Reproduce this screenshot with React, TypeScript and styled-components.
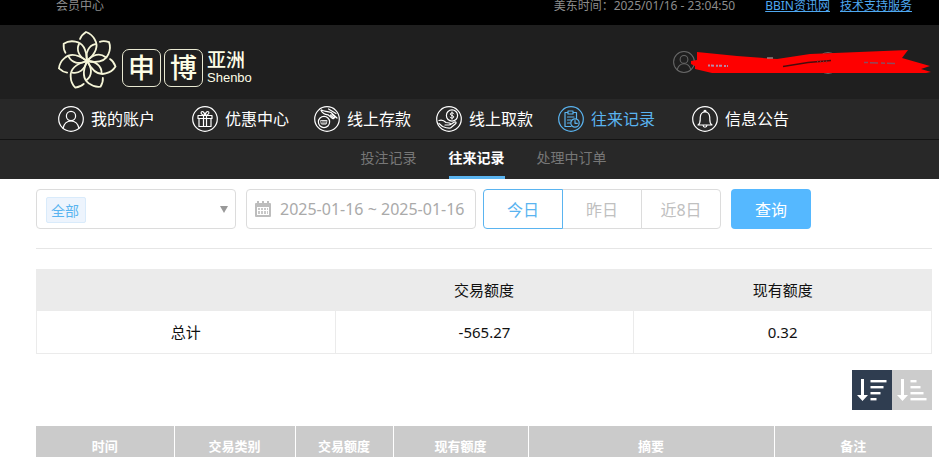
import React from "react";
import styled, { createGlobalStyle, css } from "styled-components";

const GlobalStyle = createGlobalStyle`
  *, *::before, *::after { box-sizing: border-box; }
  html { scrollbar-width: none; }
  body {
    margin: 0;
    background: #fff;
    color: #222;
    font-family: "Noto Sans", "Noto Sans CJK SC", sans-serif;
    font-size: 14px;
  }
  button, input, select { font-family: inherit; }
`;

const blue = "#5ab4f0";

const TopBar = styled.div`
  display: flex;
  align-items: flex-start;
  height: 25px;
  padding: 0 27px 0 56px;
  background: #000;
  color: #8c8c8c;
  font-size: 12px;
  line-height: 12px;
`;

const Clock = styled.span`
  margin-left: auto;
  margin-right: 30px;
`;

const TopLinks = styled.nav`
  display: flex;
  gap: 10px;
`;

const TopLink = styled.a`
  color: #4fa8f0;
  text-decoration: underline;
`;

const Header = styled.header`
  display: flex;
  align-items: center;
  height: 74px;
  padding: 0 7px 0 56px;
  background: #1f1f1f;
`;

const Logo = styled.a`
  display: flex;
  align-items: center;
  color: #fdfde6;
  text-decoration: none;
`;

const LogoSeals = styled.span`
  display: flex;
  gap: 3px;
  margin: 11px 4px 0 4px;
`;

const Seal = styled.span`
  display: flex;
  align-items: center;
  justify-content: center;
  width: 39px;
  height: 38px;
  border: 1px solid #e9e9d2;
  border-radius: 7px;
  font-size: 27px;
  font-weight: 500;
  line-height: 32px;
`;

const LogoWords = styled.span`
  display: flex;
  flex-direction: column;
  margin-top: 12px;
`;

const LogoRegion = styled.span`
  font-size: 19px;
  font-weight: 500;
  line-height: 20px;
`;

const LogoLatin = styled.span`
  font-family: "Liberation Sans", sans-serif;
  font-size: 13px;
  line-height: 16px;
`;

const Account = styled.div`
  display: flex;
  align-items: center;
  margin-left: auto;
`;

const Scribble = styled.svg`
  display: block;
  margin-left: -5px;
`;

const MainNav = styled.nav`
  height: 41px;
  padding: 0 56px 0 58px;
  background: #282828;
  border-bottom: 1px solid #131313;
`;

const MainList = styled.ul`
  display: flex;
  align-items: center;
  gap: 25px;
  height: 40px;
  margin: 0;
  padding: 0;
  list-style: none;
`;

const MainItem = styled.li<{ $spaced?: boolean }>`
  margin-right: ${(p) => (p.$spaced ? "12px" : "0")};
`;

const MainLink = styled.a<{ $active?: boolean }>`
  display: flex;
  align-items: center;
  gap: 7px;
  color: ${(p) => (p.$active ? blue : "#fff")};
  font-size: 16px;
  line-height: 26px;
  white-space: nowrap;
  text-decoration: none;
`;

const SubNav = styled.nav`
  display: flex;
  justify-content: center;
  gap: 32px;
  height: 39px;
  padding: 0 8px 0 36px;
  background: #282828;
`;

const SubLink = styled.a<{ $active?: boolean }>`
  border-bottom: 3px solid ${(p) => (p.$active ? blue : "transparent")};
  color: ${(p) => (p.$active ? "#fff" : "#777")};
  font-weight: ${(p) => (p.$active ? 700 : 400)};
  line-height: 36px;
  text-decoration: none;
`;

const Content = styled.main`
  padding: 10px 7px 0 36px;
`;

const Filters = styled.form`
  display: flex;
  gap: 10px;
  padding-bottom: 19px;
  border-bottom: 1px solid #e6e6e6;
`;

const field = css`
  height: 40px;
  border: 1px solid #dcdcdc;
  border-radius: 4px;
  background: #fff;
`;

const SelectBox = styled.div`
  ${field}
  position: relative;
  width: 200px;
`;

const TagPlate = styled.span`
  position: absolute;
  top: 7px;
  left: 9px;
  width: 40px;
  height: 26px;
  border: 1px solid #d9ebfb;
  border-radius: 2px;
  background: #edf4fd;
`;

const SelectArrow = styled.svg`
  position: absolute;
  top: 16px;
  right: 7px;
  pointer-events: none;
`;

const Select = styled.select`
  position: relative;
  width: 100%;
  height: 38px;
  padding: 3px 24px 0 14px;
  border: 0;
  background: transparent;
  color: ${blue};
  font-size: 14px;
  appearance: none;
`;

const DateBox = styled.label`
  ${field}
  display: flex;
  align-items: center;
  gap: 8px;
  width: 230px;
  padding: 0 7px;
`;

const DateInput = styled.input`
  flex: 1;
  min-width: 0;
  padding: 0;
  border: 0;
  background: transparent;
  color: #aaa;
  font-size: 16px;
`;

const Ranges = styled.div`
  display: flex;
  margin-left: -3px;
`;

const RangeButton = styled.button<{ $active?: boolean }>`
  width: 80px;
  height: 40px;
  padding: 0;
  border: 1px solid ${(p) => (p.$active ? blue : "#dcdcdc")};
  background: #fff;
  color: ${(p) => (p.$active ? blue : "#c0c0c0")};
  font-size: 16px;
  position: relative;
  z-index: ${(p) => (p.$active ? 1 : 0)};
  &:first-child { border-radius: 4px 0 0 4px; }
  &:last-child { border-radius: 0 4px 4px 0; }
  & + & { margin-left: -1px; }
`;

const QueryButton = styled.button`
  width: 80px;
  height: 40px;
  padding: 0;
  border: 0;
  border-radius: 4px;
  background: #55b8ff;
  color: #fff;
  font-size: 16px;
`;

const Summary = styled.table`
  width: 100%;
  margin-top: 20px;
  border-spacing: 0;
  table-layout: fixed;
  color: #111;
  font-size: 15px;
  line-height: 22px;
  text-align: center;
  th, td {
    padding: 0;
    font-weight: 400;
  }
  th {
    height: 42px;
    background: #ebebeb;
  }
  td {
    height: 43px;
    border: solid #ebebeb;
    border-width: 0 0 1px 1px;
  }
  td:last-child { border-right-width: 1px; }
`;

const SortBar = styled.div`
  display: flex;
  justify-content: flex-end;
  margin: 16px 0;
`;

const SortButton = styled.button<{ $active?: boolean }>`
  display: flex;
  width: 40px;
  height: 40px;
  padding: 0;
  border: 0;
  background: ${(p) => (p.$active ? "#2f3d50" : "#ccc")};
`;

const Records = styled.table`
  width: 100%;
  border-collapse: collapse;
  table-layout: fixed;
  th {
    height: 40px;
    padding: 0;
    background: #cbcbcb;
    color: #fff;
    font-size: 13px;
    font-weight: 700;
    line-height: 20px;
  }
  th + th { border-left: 1px solid #fff; }
`;

const petals = [0, 1, 2, 3, 4, 5, 6];

const Flower = () => (
  <svg width="62" height="62" viewBox="-31 -30 62 62" fill="none" stroke="#f6f6d8" strokeWidth="1.800" strokeLinecap="round" aria-hidden="true">
    {petals.map((i) => (
      <g key={i} transform={`rotate(${(i * 360) / 7})`}>
        <path d="M0 0C-8 -4 -11 -11 -8 -17" />
        <path d="M0 0C7 -6 12 -14 8 -21C6 -25 2 -28 -1 -29C-4 -27 -6 -25 -7 -22" />
      </g>
    ))}
  </svg>
);

const iconShapes: Record<string, React.ReactNode> = {
  user: (
    <>
      <circle cx="13" cy="10" r="4.600" />
      <path d="M5 22.400C6 17.500 9 15 13 15S20 17.500 21 22.400" />
    </>
  ),
  gift: (
    <>
      <path d="M6 9.500h14v3H6zM7 12.500h12v8H7zM11.500 9.500v11M14.500 9.500v11M13 9.200C10 9 8.500 7.500 9.300 6C10.500 4.500 12.500 6.500 13 9.200C13.500 6.500 15.500 4.500 16.700 6C17.500 7.500 16 9 13 9.200" />
    </>
  ),
  deposit: (
    <>
      <circle cx="10" cy="16" r="5.600" />
      <path d="M7 14.500h6l-.7 3.500h-4.600zM9 14.500v3.500M11 14.500v3.500" strokeWidth="0.800" />
      <path d="M7.500 4C10 5.500 13 5 17 6.500L23 12M7 4.500C8.500 7.500 10.500 8.500 14 8.800L18.500 12.500C19.500 13 20 12.300 19.500 11.600L16.500 9M19.500 11.600C20.800 12.200 21.300 11.200 20.500 10.500L18 8.300M14.500 3L22 7.500" />
    </>
  ),
  withdraw: (
    <>
      <circle cx="16" cy="9.500" r="5.600" />
      <path d="M18 7.700C17.200 6.400 14.200 6.600 14.300 8.200C14.400 9.800 17.800 9.100 17.800 10.900C17.800 12.500 14.800 12.600 14 11.200M16 5.900v7.300" strokeWidth="1" />
      <path d="M3 14.500C6 13.500 8 14.500 10 16.500L13.500 17C15 17.500 14.500 19 13 19H9M14.500 18.500L18.500 16C20 15.500 20.700 16.800 19.500 17.800L14.500 22C11.500 22.500 9 21.500 6.500 20.500L3 17.500" />
    </>
  ),
  records: (
    <>
      <path d="M13 20.500H7V6.500h3M15 6.500h3.500v6M10 5h5v3h-5zM9.500 11h6.500M9.500 14h3.500M9.500 17h2.500" />
      <circle cx="17" cy="17" r="4.200" />
      <path d="M17 14.500v2.800h2.300" />
    </>
  ),
  bell: (
    <>
      <path d="M6 19C9 17 8 14 8.300 11C8.600 7.700 10.500 6 13 6S17.400 7.700 17.700 11C18 14 17 17 20 19ZM12 5.800C12 4 14 4 14 5.800M11 19.300C11.300 21.900 14.700 21.900 15 19.300" />
    </>
  ),
};

const CircleIcon = ({ name, size = 26 }: { name: string; size?: number }) => (
  <svg width={size} height={size} viewBox="0 0 26 26" fill="none" stroke="currentColor" strokeWidth="1.200" strokeLinecap="round" strokeLinejoin="round" aria-hidden="true">
    <circle cx="13" cy="13" r="12.300" />
    {iconShapes[name]}
  </svg>
);

const AccountMark = styled.span`
  display: flex;
  color: #686868;
`;

const CalendarIcon = () => (
  <svg width="18" height="18" viewBox="0 0 18 18" aria-hidden="true">
    <path fill="#bdbdbd" fillRule="evenodd" d="M1 4Q1 3 2 3h1V1h2v2h3V1h2v2h3V1h2v2h1Q17 3 17 4v12Q17 17 16 17H2Q1 17 1 16zM3 7v8h12V7z" />
    <path fill="#c8c8c8" d="M4 8h2v2H4zM7 8h2v2H7zM10 8h2v2h-2zM13 8h1v2h-1zM4 11h2v3H4zM7 11h2v3H7zM10 11h2v3h-2zM13 11h1v3h-1z" />
  </svg>
);

const SortIcon = ({ widths }: { widths: number[] }) => (
  <svg width="40" height="40" viewBox="0 0 40 40" fill="#fff" aria-hidden="true">
    <path d="M9 9h3v16h4l-5.500 6L5 25h4z" />
    {widths.map((w, i) => (
      <rect key={i} x="18.500" y={10 + i * 6} width={w} height="2.400" />
    ))}
  </svg>
);

const mainItems = [
  { label: "我的账户", icon: "user", spaced: true },
  { label: "优惠中心", icon: "gift" },
  { label: "线上存款", icon: "deposit" },
  { label: "线上取款", icon: "withdraw" },
  { label: "往来记录", icon: "records", active: true, spaced: true },
  { label: "信息公告", icon: "bell" },
];

const columns = [
  { label: "时间", share: 138 },
  { label: "交易类别", share: 121 },
  { label: "交易额度", share: 98 },
  { label: "现有额度", share: 135 },
  { label: "摘要", share: 246 },
  { label: "备注", share: 158 },
];
const totalShare = columns.reduce((sum, c) => sum + c.share, 0);

export default function App() {
  return (
    <>
      <GlobalStyle />
      <TopBar>
        <span>会员中心</span>
        <Clock>美东时间：2025/01/16 - 23:04:50</Clock>
        <TopLinks>
          <TopLink href="#news">BBIN资讯网</TopLink>
          <TopLink href="#support">技术支持服务</TopLink>
        </TopLinks>
      </TopBar>
      <Header>
        <Logo href="#home">
          <Flower />
          <LogoSeals>
            <Seal>申</Seal>
            <Seal>博</Seal>
          </LogoSeals>
          <LogoWords>
            <LogoRegion>亚洲</LogoRegion>
            <LogoLatin>Shenbo</LogoLatin>
          </LogoWords>
        </Logo>
        <Account>
          <AccountMark>
            <CircleIcon name="user" size={22} />
          </AccountMark>
          <Scribble width="242" height="26" viewBox="0 0 242 26" aria-hidden="true">
            <circle cx="138" cy="14" r="10.500" fill="none" stroke="#686868" />
            <path fill="#fe0000" d="M7 3L47 7L87 10L120 5L218 1L212 9L240 17L231 20L241 23L236 24H22L5 20V17L1 15V12L7 11Z" />
            <path d="M93 17.500L118 13.500L141 11.500" stroke="#4a0c0c" strokeWidth="1.500" fill="none" />
            <path d="M18 16.500L38 17" stroke="#b58aa6" strokeWidth="2" strokeDasharray="2 1 3 2" />
            <path d="M127 12.500h12" stroke="#7d3030" strokeWidth="2" strokeDasharray="1 2" />
            <path d="M174 13.500L207 14.500" stroke="#8f4a5c" strokeWidth="1.500" strokeDasharray="4 2 8 3" />
            <path d="M77 9L83 9" stroke="#c9b0b0" />
          </Scribble>
        </Account>
      </Header>
      <MainNav aria-label="主导航">
        <MainList>
          {mainItems.map((item) => (
            <MainItem key={item.label} $spaced={item.spaced}>
              <MainLink href={`#${item.icon}`} $active={item.active}>
                <CircleIcon name={item.icon} />
                {item.label}
              </MainLink>
            </MainItem>
          ))}
        </MainList>
      </MainNav>
      <SubNav aria-label="记录">
        <SubLink href="#bets">投注记录</SubLink>
        <SubLink href="#history" $active>往来记录</SubLink>
        <SubLink href="#pending">处理中订单</SubLink>
      </SubNav>
      <Content>
        <Filters onSubmit={(e) => e.preventDefault()}>
          <SelectBox>
            <TagPlate />
            <Select aria-label="交易类别" defaultValue="all">
              <option value="all">全部</option>
            </Select>
            <SelectArrow width="8" height="7" viewBox="0 0 8 7" aria-hidden="true">
              <path d="M0 0h8L4 7z" fill="#999" />
            </SelectArrow>
          </SelectBox>
          <DateBox>
            <CalendarIcon />
            <DateInput type="text" aria-label="日期" defaultValue="2025-01-16 ~ 2025-01-16" />
          </DateBox>
          <Ranges>
            <RangeButton type="button" $active>今日</RangeButton>
            <RangeButton type="button">昨日</RangeButton>
            <RangeButton type="button">近8日</RangeButton>
          </Ranges>
          <QueryButton type="submit">查询</QueryButton>
        </Filters>
        <Summary>
          <thead>
            <tr>
              <th />
              <th scope="col">交易额度</th>
              <th scope="col">现有额度</th>
            </tr>
          </thead>
          <tbody>
            <tr>
              <td>总计</td>
              <td>-565.27</td>
              <td>0.32</td>
            </tr>
          </tbody>
        </Summary>
        <SortBar>
          <SortButton type="button" aria-label="降序" $active>
            <SortIcon widths={[16, 13, 10, 6]} />
          </SortButton>
          <SortButton type="button" aria-label="升序">
            <SortIcon widths={[6, 10, 13, 16]} />
          </SortButton>
        </SortBar>
        <Records>
          <colgroup>
            {columns.map((c) => (
              <col key={c.label} style={{ width: `${(c.share / totalShare) * 100}%` }} />
            ))}
          </colgroup>
          <thead>
            <tr>
              {columns.map((c) => (
                <th key={c.label} scope="col">{c.label}</th>
              ))}
            </tr>
          </thead>
        </Records>
      </Content>
    </>
  );
}
